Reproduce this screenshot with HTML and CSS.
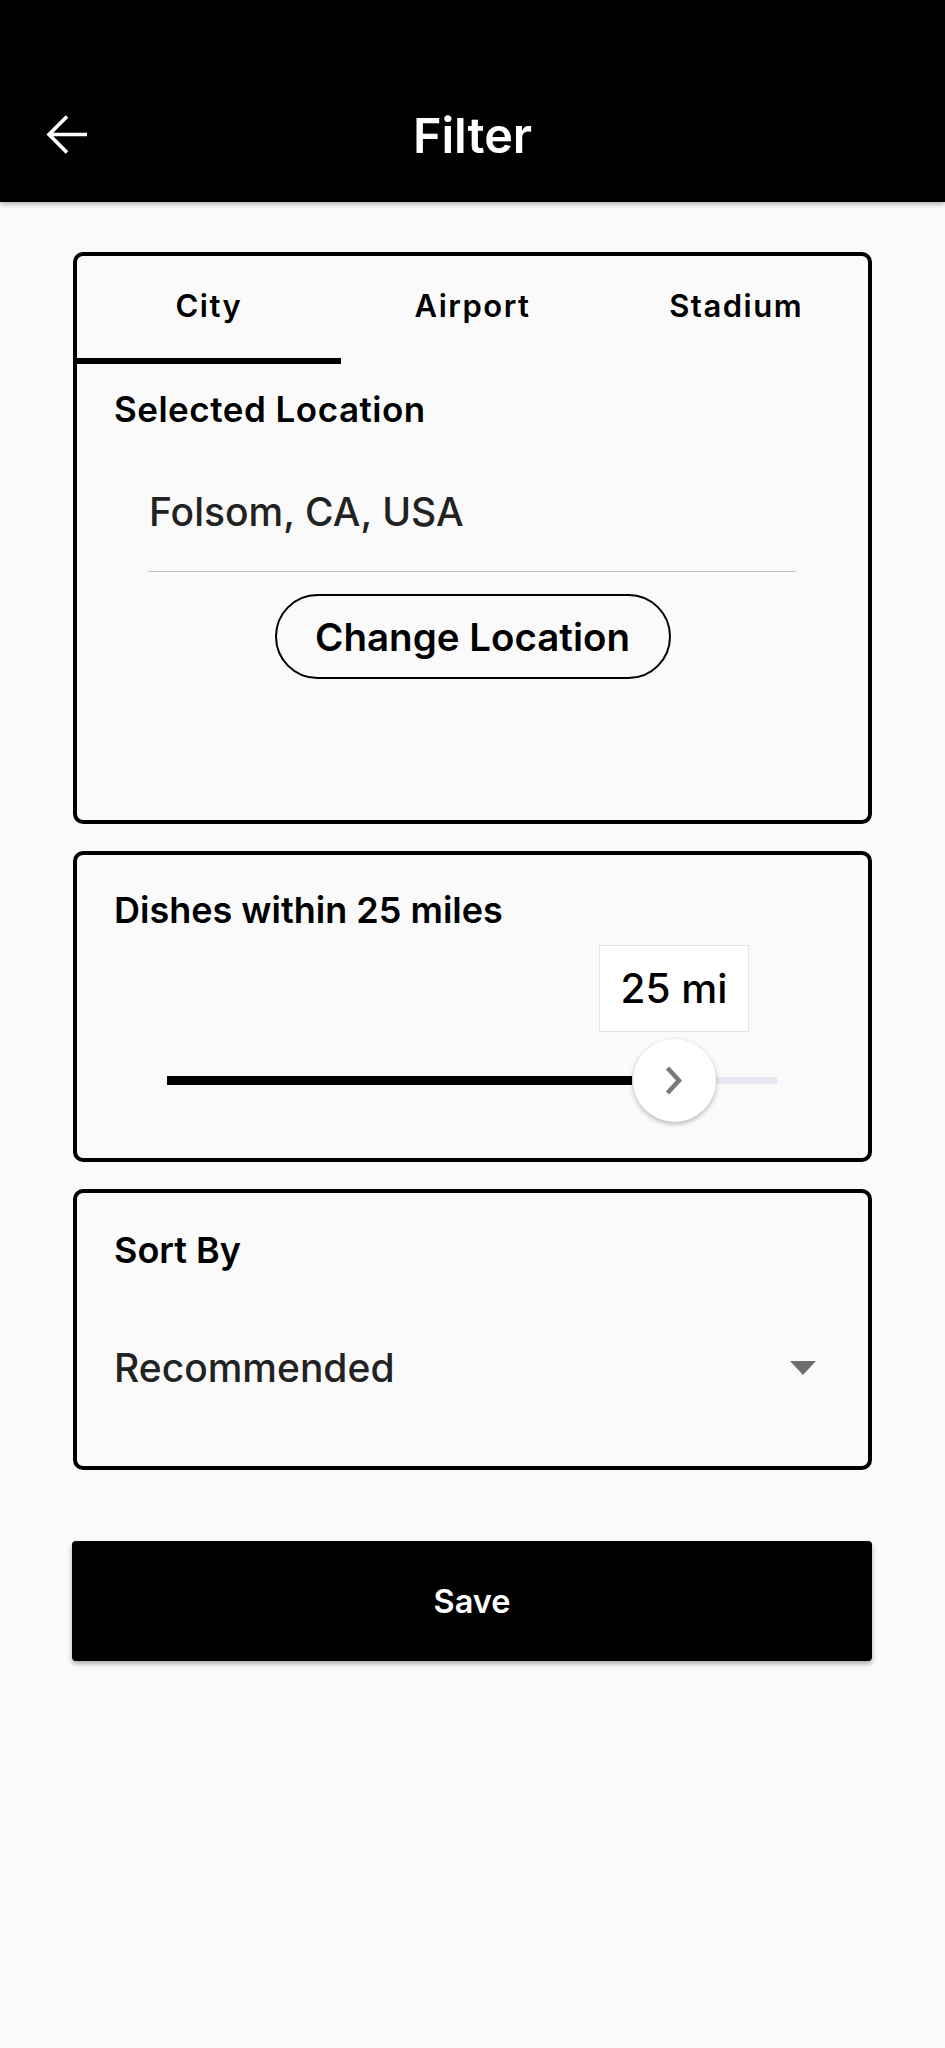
FILE: index.html
```html
<html>
<head>
	<meta charset="utf-8">
	<link rel="stylesheet" href="styles.css">
</head>
<body>
	<div class="header">
		<div class="toolbar">
			<a href="#" class="back">
				<svg width="42" height="40" viewBox="0 0 42 40">
					<path d="M41 19.5H3.5M21 1.5L3 19.5L21 37.5" fill="none" stroke="#ffffff" stroke-width="3.6"/>
				</svg>
			</a>
			<div class="title">Filter</div>
			<div></div>
		</div>
	</div>

	<div class="content">
		<div class="card location">
			<div class="tabs">
				<div class="tab active">City</div>
				<div class="tab">Airport</div>
				<div class="tab">Stadium</div>
			</div>
			<div class="label">Selected Location</div>
			<div class="field">Folsom, CA, USA</div>
			<div class="change-row">
				<a href="#" class="change">Change Location</a>
			</div>
		</div>

		<div class="card distance">
			<div class="label">Dishes within 25 miles</div>
			<div class="slider">
				<div class="value">25 mi</div>
				<div class="track-off"></div>
				<div class="track-on" style="width: 465px;"></div>
				<div class="thumb">
					<svg width="83" height="83" viewBox="0 0 83 83">
						<path d="M34.5 29L46 41.5L34.5 54" fill="none" stroke="#7a7a7a" stroke-width="4.6"/>
					</svg>
				</div>
			</div>
		</div>

		<div class="card sort">
			<div class="label">Sort By</div>
			<div class="select">
				<span>Recommended</span>
				<svg width="26" height="14" viewBox="0 0 26 14">
					<polygon points="0,0 26,0 13,14" fill="#6e6e6e"/>
				</svg>
			</div>
		</div>

		<a href="#" class="save">Save</a>
	</div>
</body>
</html>
```

FILE: styles.css
```css
body {
	font-family: "Inter", "Noto Sans", sans-serif;
	background: #fafafa;
	color: #000000;
	margin: 0px;
}
a {
	color: inherit;
	text-decoration: none;
}
.header {
	background: #000000;
	height: 202px;
	padding-top: 68px;
	box-sizing: border-box;
	box-shadow: 0px 2px 5px rgba(0, 0, 0, 0.3);
}
.toolbar {
	display: grid;
	grid-template-columns: 1fr auto 1fr;
	align-items: center;
	height: 134px;
	padding-left: 46px;
	padding-right: 46px;
}
.back {
	display: flex;
	justify-self: start;
}
.title {
	color: #ffffff;
	font-size: 48.5px;
	font-weight: 600;
	line-height: 57px;
}
.content {
	padding: 50px 73px 0px 73px;
}
.card {
	border: solid 4px #000000;
	border-radius: 10px;
	margin-bottom: 27px;
}
.label {
	font-size: 35px;
	font-weight: 600;
	line-height: 40px;
	letter-spacing: 0.5px;
	padding-left: 37px;
}
.tabs {
	display: grid;
	grid-template-columns: 1fr 1fr 1fr;
}
.tab {
	font-size: 31px;
	font-weight: 600;
	line-height: 36px;
	letter-spacing: 1.5px;
	text-align: center;
	padding-top: 32px;
	padding-bottom: 34px;
	border-bottom: solid 6px transparent;
}
.tab.active {
	border-bottom-color: #000000;
}
.location .label {
	margin-top: 25px;
}
.field {
	margin: 59px 72px 0px 71px;
	padding-left: 1px;
	padding-bottom: 36px;
	border-bottom: solid 1.5px #bdbdbd;
	font-size: 39px;
	font-weight: 500;
	line-height: 47px;
	color: #222222;
}
.change-row {
	display: flex;
	justify-content: center;
	padding-top: 22px;
	padding-bottom: 141px;
}
.change {
	width: 396px;
	height: 85px;
	box-sizing: border-box;
	border: solid 2px #000000;
	border-radius: 43px;
	display: flex;
	align-items: center;
	justify-content: center;
	font-size: 38.5px;
	font-weight: 600;
}
.distance .label {
	padding-top: 34px;
	font-size: 36px;
	line-height: 42px;
	letter-spacing: 0px;
}
.slider {
	position: relative;
	margin: 14px 0px 0px 90px;
	width: 610px;
	height: 213px;
}
.value {
	position: absolute;
	left: 432px;
	top: 0px;
	width: 150px;
	height: 87px;
	box-sizing: border-box;
	background: #ffffff;
	border: solid 1.5px #e4e4e4;
	display: flex;
	align-items: center;
	justify-content: center;
	font-size: 40.5px;
	font-weight: 500;
}
.track-on {
	position: absolute;
	left: 0px;
	top: 131px;
	height: 9px;
	background: #000000;
}
.track-off {
	position: absolute;
	left: 465px;
	right: 0px;
	top: 132px;
	height: 7px;
	background: #e6e8f3;
}
.thumb {
	position: absolute;
	left: 466px;
	top: 94px;
	width: 83px;
	height: 83px;
	border-radius: 50%;
	background: #ffffff;
	box-shadow: 0px 2px 5px rgba(0, 0, 0, 0.28);
	display: flex;
}
.sort .label {
	padding-top: 37px;
	font-size: 36px;
	line-height: 41px;
	letter-spacing: 0px;
}
.select {
	display: flex;
	align-items: center;
	justify-content: space-between;
	margin-top: 74px;
	padding: 0px 52px 75px 37px;
	font-size: 39px;
	font-weight: 500;
	line-height: 46px;
	color: #222222;
}
.save {
	display: flex;
	align-items: center;
	justify-content: center;
	height: 120px;
	margin-top: 71px;
	margin-left: -1px;
	background: #000000;
	border-radius: 4px;
	box-shadow: 0px 3px 5px rgba(0, 0, 0, 0.3);
	color: #ffffff;
	font-size: 32.5px;
	font-weight: 600;
}
```
